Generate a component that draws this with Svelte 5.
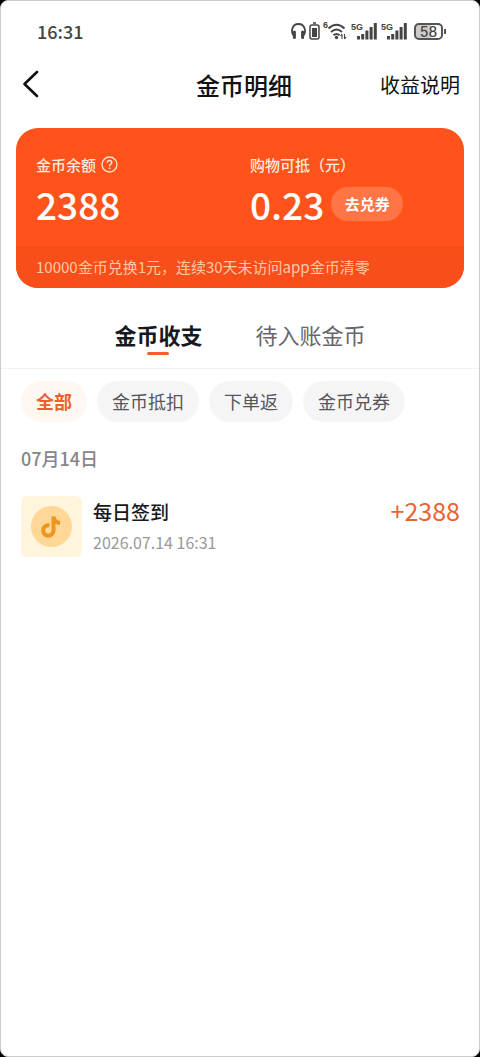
<script lang="ts">
	const filters = ['全部', '金币抵扣', '下单返', '金币兑券'];
	const tabs = ['金币收支', '待入账金币'];
	const records = [{ title: '每日签到', time: '2026.07.14 16:31', amount: '+2388' }];

	let activeTab = $state(tabs[0]);
	let activeFilter = $state(filters[0]);
</script>

<div class="screen">
	<div class="status">
		<span class="clock">16:31</span>
		<div class="status-icons">
			<svg width="15" height="18" viewBox="0 0 15 18" fill="none" stroke="#444" stroke-width="1.8">
				<path d="M3.3 14.5C-.6 11 .3 2 7.500 2S15.600 11 11.700 14.500" />
				<path d="M3.400 10v5.500M11.600 10v5.500" stroke-width="3" stroke-linecap="round" />
			</svg>
			<svg width="11" height="18" viewBox="0 0 11 18" fill="none" stroke="#444">
				<rect x="1" y="3" width="9" height="14" rx="2" stroke-width="1.5" />
				<path d="M4 1h3" stroke-width="1.6" />
				<rect x="3" y="6" width="5" height="9" fill="#444" stroke="none" />
			</svg>
			<svg width="25" height="26" viewBox="0 -4 25 26" fill="none" stroke="#444" stroke-width="2">
				<text x="0" y="6">6</text>
				<path d="M5.500 6.500Q13.500 -1 21.500 6.500M8 10Q13.500 5 19 10M10.500 13.200Q13.500 10.700 16.500 13.200" />
				<circle cx="13.500" cy="15.500" r="1.700" fill="#444" stroke="none" />
				<path d="M19 12v5M19 12l-1.500 2M21.500 17v-5M21.500 17l1.500-2" stroke-width="1.100" />
			</svg>
			{#each [1, 2] as sim (sim)}
				<svg width="27" height="26" viewBox="0 -4 27 26">
					<text x="0" y="8">5G</text>
					<path d="M6 14h3v3.500H6zM10.200 12h3v5.500h-3zM14.400 8.500h3v9h-3zM18.600 5h3v12.500h-3zM22.800 1h3v16.500h-3z" fill="#444" />
				</svg>
			{/each}
			<span class="battery">58</span>
		</div>
	</div>

	<header>
		<button class="back" aria-label="返回">
			<svg width="18" height="28" viewBox="0 0 18 28" fill="none" stroke="#111" stroke-width="2.600" stroke-linecap="round" stroke-linejoin="round">
				<path d="M15 2L2.500 14L15 26" />
			</svg>
		</button>
		<h1>金币明细</h1>
		<a class="rules" href="#rules">收益说明</a>
	</header>

	<section class="card">
		<div class="balances">
			<div>
				<div class="label">
					<span>金币余额</span>
					<svg width="17" height="17" viewBox="0 0 17 17" fill="none" stroke="#ffe3d3" stroke-width="1.300">
						<circle cx="8.500" cy="8.500" r="7.500" />
						<path d="M6.300 6.800Q6.300 4.600 8.500 4.600T10.700 6.600Q10.700 7.700 9.500 8.400Q8.500 9 8.500 10.300M8.500 11.500v1.400" stroke-width="1.500" />
					</svg>
				</div>
				<div class="value">2388</div>
			</div>
			<div>
				<div class="label">购物可抵（元）</div>
				<div class="value">0.23 <button class="redeem">去兑券</button></div>
			</div>
		</div>
		<p class="notice">10000金币兑换1元，连续30天未访问app金币清零</p>
	</section>

	<nav class="tabs">
		{#each tabs as tab (tab)}
			<button class:active={activeTab === tab} onclick={() => (activeTab = tab)}>{tab}</button>
		{/each}
	</nav>

	<main>
		<div class="filters">
			{#each filters as filter (filter)}
				<button class:active={activeFilter === filter} onclick={() => (activeFilter = filter)}>{filter}</button>
			{/each}
		</div>

		<h2>07月14日</h2>
		{#each records as record (record.time)}
			<article>
				<svg width="61" height="61" viewBox="0 0 61 61">
					<rect width="61" height="61" rx="6" fill="#fff5dc" />
					<circle cx="30.500" cy="30.500" r="20.500" fill="#ffd796" />
					<path d="M32.500 20.500V34.500A5.200 5.200 0 1 1 28.500 29.400M32.500 20.500Q33 26.500 39 27" fill="none" stroke="#ef941f" stroke-width="4" />
				</svg>
				<div class="info">
					<h3>{record.title}</h3>
					<time>{record.time}</time>
				</div>
				<strong>{record.amount}</strong>
			</article>
		{/each}
	</main>
</div>

<style>
	:global(body) {
		background: #000;
	}

	.screen {
		box-sizing: border-box;
		min-height: 100vh;
		border: 1px solid #ccc;
		border-radius: 8px;
		background: #fff;
		color: #161823;
		font-family: 'Noto Sans CJK SC', sans-serif;
	}

	button {
		padding: 0;
		border: 0;
		background: none;
		color: inherit;
		font: inherit;
		cursor: pointer;
	}

	h1,
	h2,
	h3,
	p {
		margin: 0;
	}

	svg {
		display: block;
		flex: none;
	}

	.status {
		display: flex;
		align-items: center;
		justify-content: space-between;
		height: 60px;
		padding: 0 32px 0 36px;
		color: #444;
	}

	.clock {
		font-size: 18px;
		font-weight: 500;
	}

	.status-icons {
		display: flex;
		align-items: center;
		gap: 3px;
	}

	.status text {
		fill: #444;
		stroke: none;
		font: bold 9px 'Liberation Sans', sans-serif;
	}

	.battery {
		position: relative;
		box-sizing: border-box;
		width: 29px;
		height: 17px;
		margin: 0 4px 0 3px;
		border: 2px solid #555;
		border-radius: 5px;
		background: linear-gradient(90deg, #ccc 58%, #fff 58%);
		font: 500 14px/13px Inter, sans-serif;
		text-align: center;
	}

	.battery::after {
		content: '';
		position: absolute;
		top: 4px;
		right: -5px;
		width: 2px;
		height: 5px;
		background: #555;
	}

	header {
		display: grid;
		grid-template-columns: 1fr auto 168px;
		align-items: center;
		height: 46px;
		padding: 0 19px 0 21px;
		color: #111;
	}

	.back {
		justify-self: start;
	}

	h1 {
		font-size: 24px;
		font-weight: 500;
	}

	.rules {
		justify-self: end;
		color: inherit;
		font-size: 20px;
		text-decoration: none;
	}

	.card {
		margin: 21px 15px 0;
		border-radius: 22px;
		overflow: hidden;
		background: #ff531b;
		color: #fff;
	}

	.balances {
		display: grid;
		grid-template-columns: 214px 1fr;
		padding: 25px 20px 13px;
	}

	.label {
		display: flex;
		align-items: center;
		gap: 5px;
		height: 22px;
		color: #ffe9dc;
		font-size: 15px;
		font-weight: 500;
	}

	.value {
		display: flex;
		align-items: center;
		gap: 7px;
		height: 58px;
		font-size: 37px;
		font-weight: 500;
		line-height: 58px;
	}

	.redeem {
		width: 72px;
		height: 34px;
		border-radius: 17px;
		background: #ff7546;
		font-size: 15px;
		font-weight: 700;
		line-height: 34px;
	}

	.notice {
		padding: 0 20px;
		background: #f84e19;
		color: #ffc9a9;
		font-size: 15px;
		line-height: 42px;
	}

	.tabs {
		display: flex;
		justify-content: center;
		gap: 53px;
		margin-top: 20px;
		border-bottom: 1px solid #f3f3f3;
	}

	.tabs button {
		height: 60px;
		padding-bottom: 8px;
		color: #66676c;
		font-size: 22px;
	}

	.tabs .active {
		position: relative;
		color: #161823;
		font-weight: 700;
	}

	.tabs .active::after {
		content: '';
		position: absolute;
		bottom: 13px;
		left: calc(50% - 11px);
		width: 22px;
		height: 3px;
		border-radius: 2px;
		background: #f0602f;
	}

	main {
		padding: 12px 19px 0 20px;
	}

	.filters {
		display: flex;
		gap: 10px;
	}

	.filters button {
		height: 41px;
		padding: 0 15px 2px;
		border-radius: 21px;
		background: #f5f5f6;
		color: #55565b;
		font-size: 18px;
	}

	.filters .active {
		background: #fff7f2;
		color: #ec602c;
		font-weight: 700;
	}

	h2 {
		margin: 22px 0 24px;
		color: #85868a;
		font-size: 18px;
		font-weight: 500;
		line-height: 28px;
	}

	article {
		display: flex;
		gap: 11px;
	}

	.info {
		flex: 1;
	}

	h3 {
		font-size: 19px;
		font-weight: 500;
		line-height: 32px;
	}

	time {
		color: #999;
		font-size: 16px;
		line-height: 28px;
	}

	strong {
		color: #ea6336;
		font-size: 25px;
		font-weight: 400;
		line-height: 28px;
	}
</style>
